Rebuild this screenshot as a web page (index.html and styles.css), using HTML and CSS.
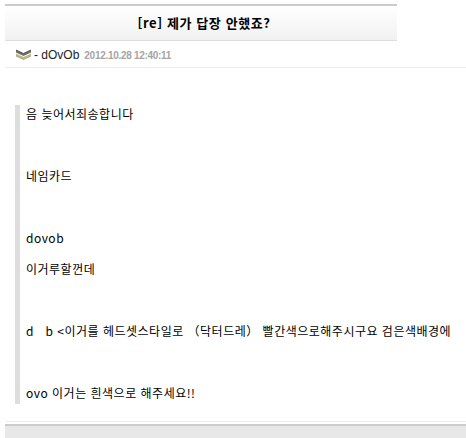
FILE: index.html
```html
<!DOCTYPE html>
<html lang="ko">
<head>
  <meta charset="UTF-8">
  <title>[re] 제가 답장 안했죠?</title>
  <link rel="stylesheet" href="styles.css">
</head>
<body>
  <div class="post">
    <div class="post-head">
      <h1>[re] 제가 답장 안했죠?</h1>
    </div>
    <div class="meta">
      <svg class="level" width="17" height="11" viewBox="0 0 17 11">
        <path d="M1 1 L8.5 4.5 L16 1 L16 3.5 L8.5 7 L1 3.5 Z" fill="#6e6e62"/>
        <path d="M1 4.5 L8.5 8 L16 4.5 L16 7 L8.5 10.5 L1 7 Z" fill="#bdb78c"/>
        <path d="M1 1 L8.5 4.5 L16 1" fill="none" stroke="#3c3c3c" stroke-width="0.8"/>
        <path d="M1 7 L8.5 10.5 L16 7" fill="none" stroke="#8c8660" stroke-width="0.6"/>
      </svg>
      <span class="author">- dOvOb</span>
      <span class="date">2012.10.28 12:40:11</span>
    </div>
    <div class="body">
      <div class="quote">
        <p>음 늦어서죄송합니다</p>
        <p></p>
        <p>네임카드</p>
        <p></p>
        <p>dovob</p>
        <p>이거루할껀데</p>
        <p></p>
        <p>d&nbsp;&nbsp;&nbsp;b &lt;이거를 헤드셋스타일로 （닥터드레） 빨간색으로해주시구요 검은색배경에</p>
        <p></p>
        <p>ovo 이거는 흰색으로 해주세요!!</p>
      </div>
    </div>
    <div class="post-foot"></div>
  </div>
</body>
</html>
```

FILE: styles.css
```css
* { box-sizing: border-box; }
body {
  margin: 0;
  background: #fff;
  color: #000;
  font-family: "Noto Sans CJK KR", "Liberation Sans", sans-serif;
  font-size: 12px;
}
.post {
  padding: 4px 0 0 5px;
}
.post-head {
  width: 392px;
  height: 37px;
  border-top: 2px solid #cccccc;
  border-bottom: 1px solid #dddddd;
  background: linear-gradient(to bottom, #ffffff, #f1f1f1);
  display: flex;
  align-items: center;
  justify-content: center;
}
.post-head h1 {
  margin: 0 0 0 6px;
  font-size: 13px;
  font-weight: bold;
  letter-spacing: 0.6px;
  line-height: 16px;
}
.meta {
  height: 27px;
  display: flex;
  align-items: center;
  padding: 1px 0 0 10px;
  border-bottom: 1px solid #ececec;
}
.level {
  display: block;
  margin-right: 2px;
}
.author {
  font-family: "Liberation Sans", sans-serif;
  font-size: 12px;
  color: #222;
}
.date {
  font-family: "Liberation Sans", sans-serif;
  font-size: 10px;
  font-weight: bold;
  letter-spacing: -0.3px;
  color: #a5a5a5;
  margin-left: 5px;
  padding-top: 2px;
}
.body {
  padding: 37px 0 17px 10px;
}
.quote {
  border-left: 5px solid #dddddd;
  padding: 0 0 2px 6px;
}
.quote p {
  margin: 0 0 13px;
  height: 18px;
  line-height: 18px;
  letter-spacing: 0.5px;
  white-space: nowrap;
}
.quote p:last-child {
  margin-bottom: 0;
}
.post-foot {
  border-top: 1px solid #efefef;
  padding-top: 2px;
}
.post-foot::after {
  content: "";
  display: block;
  height: 14px;
  border-top: 2px solid #cccccc;
  background: #e8e8e8;
}
```
